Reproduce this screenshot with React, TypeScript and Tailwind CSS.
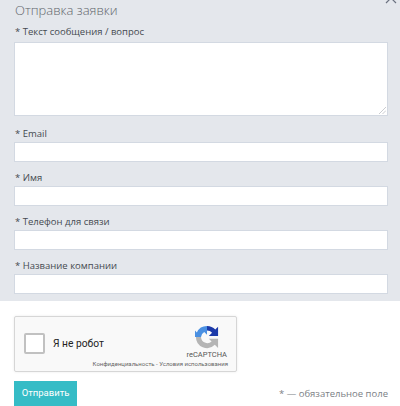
import React from 'react';

const fields = ['* Email', '* Имя', '* Телефон для связи', '* Название компании'];

const RecaptchaLogo: React.FC = () => (
  <svg width="24" height="24" viewBox="0 0 26 26">
    <path d="M13 1 A12 12 0 0 1 22 5 L25 2 V12 H15 L18.5 8.5 A7 7 0 0 0 13 6 Z" fill="#1c3aa9" />
    <path d="M13 1 A12 12 0 0 0 2 8 L-1 5 V13 H6.5 A7 7 0 0 1 10 7.5 L13 10.5 V1 Z" fill="#4a90e2" />
    <path d="M1 13 H6.5 A7 7 0 0 0 18 18 L15 15 H25 V25 L21.5 21.5 A12 12 0 0 1 1 13 Z" fill="#b5b5b5" />
  </svg>
);

export default function App() {
  return (
    <div className="relative h-[406px] w-[400px] overflow-hidden bg-white font-['Open_Sans',sans-serif]">
      <svg className="absolute left-[385px] top-[-8px]" width="12" height="12" viewBox="0 0 12 12" fill="none" stroke="#6b7280" strokeWidth="1.2">
        <path d="M1 1 L11 11 M11 1 L1 11" />
      </svg>

      <div className="h-[301px] bg-[#e4e7ec] px-[14px]">
        <h2 className="pl-[1px] pt-[1px] text-[13px] font-light leading-[18px] text-[#5f656b]">Отправка заявки</h2>
        <label className="mt-[5px] block pl-[1px] text-[9.5px] leading-[15px] text-[#444a50]">* Текст сообщения / вопрос</label>
        <div className="relative mt-[3px] h-[74px] w-[374px]">
          <textarea className="block h-full w-full resize-none border border-[#d3d9e2] bg-white" />
          <svg className="absolute bottom-[2px] right-[2px]" width="7" height="7" viewBox="0 0 7 7" fill="none" stroke="#b4b8bd" strokeWidth="0.7">
            <path d="M0 7 L7 0 M3.5 7 L7 3.5" />
          </svg>
        </div>
        {fields.map((f, i) => (
          <div key={f} className={i === 0 ? 'mt-[10px]' : 'mt-[8px]'}>
            <label className="block pl-[1px] text-[9.5px] leading-[15px] text-[#444a50]">{f}</label>
            <input type="text" className="mt-[1px] block h-[20px] w-[374px] border border-[#d3d9e2] bg-white" />
          </div>
        ))}
      </div>

      <div className="ml-[14px] mt-[15px] flex h-[56px] w-[223px] flex-col rounded-[2px] border border-[#d6d6d6] bg-[#f9f9f9] shadow-[0_0_3px_rgba(0,0,0,0.08)]">
        <div className="flex h-[43px]">
          <div className="ml-[9px] mt-[16px] h-[21px] w-[21px] shrink-0 rounded-[2px] border-2 border-[#c1c1c1] bg-white" />
          <span className="ml-[8px] mt-[20px] whitespace-nowrap font-['Roboto',sans-serif] text-[10.25px] leading-[14px] text-[#222]">Я не робот</span>
          <div className="ml-auto flex flex-col items-center pr-[9px]">
            <div className="mt-[8px]"><RecaptchaLogo /></div>
            <span className="mt-[1px] font-['Roboto',sans-serif] text-[7.5px] leading-[9px] text-[#555]">reCAPTCHA</span>
          </div>
        </div>
        <span className="self-end whitespace-nowrap pr-[8px] font-['Roboto',sans-serif] text-[6px] leading-[7px] text-[#666]">Конфиденциальность - Условия использования</span>
      </div>

      <div className="ml-[14px] mt-[9px] flex w-[374px] items-start justify-between">
        <button className="h-[25px] w-[63px] bg-[#35bcc6] font-['Roboto',sans-serif] text-[9.5px] text-white">Отправить</button>
        <span className="mt-[6px] text-[9.5px] leading-[14px] text-[#7b8085]">* — обязательное поле</span>
      </div>
    </div>
  );
}
